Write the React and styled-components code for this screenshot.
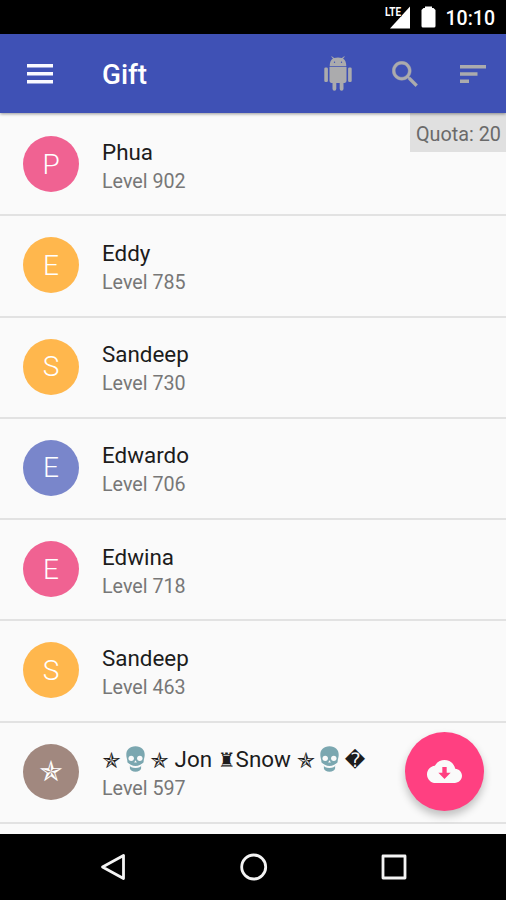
import React from "react";
import styled, { createGlobalStyle } from "styled-components";

const GlobalStyle = createGlobalStyle`
	* {
		box-sizing: border-box;
	}

	body {
		margin: 0;
		background-color: #fafafa;
		font-family: Roboto, "DejaVu Sans", sans-serif;
	}
`;

const Screen = styled.div`
	display: flex;
	flex-direction: column;
	width: 506px;
	height: 900px;
	overflow: hidden;
	background-color: #fafafa;
`;

const StatusBar = styled.div`
	flex: none;
	display: flex;
	align-items: center;
	justify-content: flex-end;
	height: 34px;
	padding-right: 11px;
	background-color: black;
	color: white;
`;

const Signal = styled.svg`
	width: 26px;
	height: 24px;
	margin-right: 10px;
`;

const Battery = styled.svg`
	width: 15px;
	height: 22px;
	margin-right: 10px;
`;

const Clock = styled.span`
	font-size: 19.5px;
	font-weight: 500;
	line-height: 34px;
	padding-top: 3px;
`;

const Toolbar = styled.header`
	flex: none;
	display: flex;
	align-items: center;
	height: 79px;
	padding: 0 20px 0 27px;
	background-color: #3f51b5;
	box-shadow: 0 1px 3px rgba(0, 0, 0, 0.4);
	z-index: 2;
`;

const MenuIcon = styled.svg`
	width: 26px;
	height: 20px;
	fill: #fafaff;
`;

const Title = styled.h1`
	flex: 1;
	margin: 0 0 0 49px;
	padding-top: 3px;
	color: white;
	font-size: 27.8px;
	font-weight: 500;
	line-height: 32px;
`;

const Actions = styled.div`
	display: flex;
	align-items: center;
	color: #ababad;
`;

const ActionIcon = styled.svg`
	width: ${(props) => props.$width}px;
	height: ${(props) => props.$height}px;
	margin-left: ${(props) => props.$gap || 0}px;
	fill: currentColor;
`;

const Content = styled.main`
	position: relative;
	flex: 1;
	min-height: 0;
	padding-top: 2px;
	overflow: hidden;
`;

const Quota = styled.div`
	position: absolute;
	top: 0;
	right: 0;
	width: 96px;
	height: 39px;
	padding-left: 6px;
	background-color: #e0e0e0;
	color: #6a6a6a;
	font-size: 19.8px;
	line-height: 43px;
	white-space: nowrap;
`;

const List = styled.ul`
	margin: 0;
	padding: 0;
	list-style: none;
`;

const Row = styled.li`
	display: flex;
	align-items: center;
	height: 101.25px;
	padding: 0 23px;
	border-bottom: 2px solid #e2e2e2;
`;

const Avatar = styled.div`
	flex: none;
	display: flex;
	align-items: center;
	justify-content: center;
	width: 56px;
	height: 56px;
	margin: 0 23px 1px 0;
	border-radius: 50%;
	background-color: ${(props) => props.$color};
	color: white;
	font-size: 28px;
	font-weight: 300;
	line-height: 56px;
	padding-top: 1px;
`;

const Details = styled.div`
	padding-top: 3px;
`;

const Name = styled.div`
	height: 29px;
	color: #1c1c1c;
	font-size: 22.4px;
	line-height: 28px;
	white-space: pre;
`;

const Level = styled.div`
	height: 28px;
	color: #777;
	font-size: 19.7px;
	line-height: 29px;
`;

const Glyph = styled.span`
	display: inline-block;
	width: ${(props) => props.$width}px;
	font-family: "DejaVu Sans", sans-serif;
	font-size: ${(props) => props.$size || 22}px;
	font-weight: 400;
	line-height: 28px;
	text-align: center;
	vertical-align: ${(props) => props.$drop || 0}px;
`;

const SkullIcon = styled.svg`
	width: 19px;
	height: 26px;
	margin: 0 5px;
	vertical-align: -5px;
`;

const Fab = styled.button`
	position: absolute;
	right: 22px;
	bottom: 23px;
	display: flex;
	align-items: center;
	justify-content: center;
	width: 79px;
	height: 79px;
	padding: 0;
	border: none;
	border-radius: 50%;
	background-color: #ff4081;
	box-shadow: 0 5px 8px rgba(0, 0, 0, 0.24);
`;

const NavBar = styled.nav`
	flex: none;
	display: flex;
	align-items: center;
	justify-content: space-between;
	height: 66.5px;
	padding: 0 98px 0 100px;
	background-color: black;
`;

const NavIcon = styled.svg`
	width: 28px;
	height: 28px;
	fill: none;
	stroke: #f4f4f4;
	stroke-width: 2.8;
	stroke-linejoin: round;
`;

const Skull = () => (
	<SkullIcon viewBox="0 0 19 26">
		<path
			fill="#7ba7b0"
			d="M9.500 0.300C3.500 0.300 0.300 4 0.300 8.700c0 2.300.6 3.600.9 5.300.2 1.200 0 2.200.7 2.900.6.6 1.500.7 2 1.200v4.400c.3 2 2.600 3.200 5.600 3.200s5.300-1.200 5.600-3.200v-4.400c.5-.5 1.400-.6 2-1.200.7-.7.5-1.700.7-2.900.3-1.700.9-3 .9-5.300C18.700 4 15.500.3 9.500.3z"
		/>
		<ellipse cx="5.200" cy="12.300" rx="2.700" ry="2.600" fill="#fafafa" />
		<ellipse cx="13.800" cy="12.300" rx="2.700" ry="2.600" fill="#fafafa" />
		<path d="M9.500 14.300l-1.400 2.300h2.800z" fill="#fafafa" />
		<path d="M1.800 17.200q2 .5 3 1.500 4.700 2.800 9.400 0 1-1 3-1.500l-1.900 2q-.7 2.600-5.800 2.700-5.100-.1-5.800-2.700z" fill="#fafafa" />
	</SkullIcon>
);

const Star = () => (
	<Glyph $width={19} $drop={-1}>
		✯
	</Glyph>
);

const players = [
	{ name: "Phua", level: 902, color: "#f06292" },
	{ name: "Eddy", level: 785, color: "#ffb74d" },
	{ name: "Sandeep", level: 730, color: "#ffb74d" },
	{ name: "Edwardo", level: 706, color: "#7986cb" },
	{ name: "Edwina", level: 718, color: "#f06292" },
	{ name: "Sandeep", level: 463, color: "#ffb74d" },
	{
		name: (
			<>
				<Star />
				<Skull />
				<Star /> Jon <Glyph $width={18} $size={20}>♜</Glyph>Snow <Star />
				<Skull />
				<Glyph $width={21} $size={20}>�</Glyph>
			</>
		),
		initial: <Glyph $width={28} $size={28}>✯</Glyph>,
		level: 597,
		color: "#a1887f",
	},
];

const App = () => {
	return (
		<Screen>
			<GlobalStyle />
			<StatusBar>
				<Signal viewBox="0 0 26 24">
					<path d="M25 1.500v22H5z" fill="white" />
					<text
						x="0"
						y="11"
						fill="white"
						stroke="black"
						strokeWidth="1.200"
						paintOrder="stroke"
						fontFamily="Roboto, sans-serif"
						fontSize="12"
						fontWeight="700"
						textLength="16"
						lengthAdjust="spacingAndGlyphs"
					>
						LTE
					</text>
				</Signal>
				<Battery viewBox="0 0 15 22">
					<path d="M4 .5h7v1.500h1.500l2 2V20q0 1.500-1.500 1.500H2Q.5 21.500.5 20V4l2-2H4z" fill="white" />
				</Battery>
				<Clock>10:10</Clock>
			</StatusBar>

			<Toolbar>
				<MenuIcon viewBox="0 0 26 20">
					<path d="M0 0h26v3.600H0zM0 8h26v3.600H0zM0 16h26v3.600H0z" />
				</MenuIcon>
				<Title>Gift</Title>
				<Actions>
					<ActionIcon viewBox="0 0 28 35" $width={28} $height={35}>
						<path d="M5.700 10.300C5.700 6.500 6.700 3.700 9 2.400L7.200.8l.6-.6 2.300 1.800q3.900-1 7.800 0L20.200.2l.6.6L19 2.400c2.300 1.300 3.300 4.100 3.300 7.900z" />
						<path d="M5.500 11.100h17v14q0 1.800-1.800 1.800h-1.200v5.900a1.900 1.900 0 0 1-3.800 0v-5.900h-3.400v5.900a1.900 1.900 0 0 1-3.800 0v-5.900H7.300q-1.800 0-1.800-1.800z" />
						<rect x="0.300" y="11.500" width="3.600" height="14.500" rx="1.300" />
						<rect x="24.100" y="11.500" width="3.600" height="14.500" rx="1.300" />
						<circle cx="10.500" cy="6.300" r="0.700" fill="#3f51b5" />
						<circle cx="17.500" cy="6.300" r="0.700" fill="#3f51b5" />
					</ActionIcon>
					<ActionIcon viewBox="2.800 2.800 17.900 17.900" $width={26} $height={26} $gap={40}>
						<path
							stroke="currentColor"
							strokeWidth="0.300"
							d="M15.500 14h-.79l-.28-.27C15.410 12.590 16 11.110 16 9.500 16 5.910 13.090 3 9.500 3S3 5.910 3 9.500 5.910 16 9.500 16c1.610 0 3.090-.59 4.230-1.570l.27.28v.79l5 4.990L20.490 19l-4.990-5zm-6 0C7.010 14 5 11.990 5 9.500S7.010 5 9.500 5 14 7.010 14 9.500 11.990 14 9.500 14z"
						/>
					</ActionIcon>
					<ActionIcon viewBox="0 0 26 18" $width={26} $height={18} $gap={42}>
						<path d="M0 0h26v3.600H0zM0 7.200h17.500v3.600H0zM0 14.400h9v3.600H0z" />
					</ActionIcon>
				</Actions>
			</Toolbar>

			<Content>
				<List>
					{players.map((player, index) => (
						<Row key={index}>
							<Avatar $color={player.color}>{player.initial || player.name[0]}</Avatar>
							<Details>
								<Name>{player.name}</Name>
								<Level>Level {player.level}</Level>
							</Details>
						</Row>
					))}
				</List>
				<Quota>Quota: 20</Quota>
				<Fab aria-label="Download">
					<svg width="35" height="23" viewBox="0 4 24 16" fill="#fafafa" preserveAspectRatio="none">
						<path d="M19.350 10.040C18.670 6.590 15.640 4 12 4 9.110 4 6.600 5.640 5.350 8.040 2.340 8.360 0 10.910 0 14c0 3.310 2.690 6 6 6h13c2.760 0 5-2.240 5-5 0-2.640-2.050-4.780-4.650-4.960zM16.200 12.800l-4.200 4.400-4.200-4.400h2.700V8.800h3v4z" />
					</svg>
				</Fab>
			</Content>

			<NavBar>
				<NavIcon viewBox="0 0 28 28">
					<path d="M23.500 2.500v23L2.500 14z" />
				</NavIcon>
				<NavIcon viewBox="0 0 28 28">
					<circle cx="13.700" cy="14" r="12" />
				</NavIcon>
				<NavIcon viewBox="0 0 28 28">
					<rect x="3" y="3" width="22" height="22" />
				</NavIcon>
			</NavBar>
		</Screen>
	);
};

export default App;
